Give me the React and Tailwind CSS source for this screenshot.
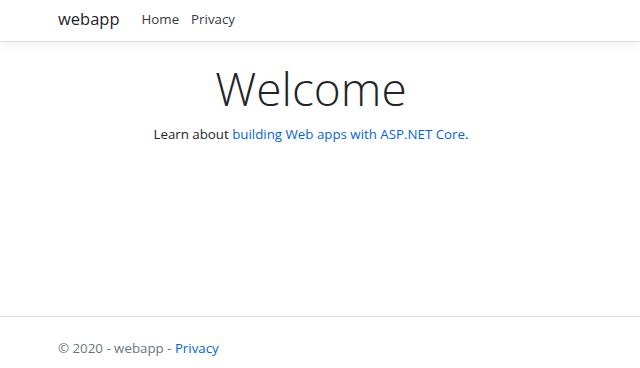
import React from 'react';

const App = () => {
  return (
    <div
      className="min-h-[368px] flex flex-col bg-white text-[13.3px] text-[#212529]"
      style={{ fontFamily: '"Open Sans", "Noto Sans", sans-serif' }}
    >
      {/* Header */}
      <header className="mb-[19px]">
        <nav className="h-[42px] bg-white border-b border-[#dee2e6] shadow-[0_3.5px_10.5px_rgba(0,0,0,0.05)]">
          <div className="h-full px-[58px] flex items-center pb-[2px]">
            <a href="#" className="text-[16.5px] text-black/90 mr-[22px]">webapp</a>
            <ul className="flex items-center">
              <li>
                <a href="#" className="block pr-[12px] text-[13.3px] text-[#343a40]">Home</a>
              </li>
              <li>
                <a href="#" className="block text-[13.3px] text-[#343a40]">Privacy</a>
              </li>
            </ul>
          </div>
        </nav>
      </header>

      {/* Main */}
      <main className="flex-1 text-center pr-[18px]">
        <h1 className="text-[46px] font-light leading-[1.2] mb-[8px]">Welcome</h1>
        <p className="leading-[21px]">
          Learn about <a href="#" className="text-[#0366d6]">building Web apps with ASP.NET Core</a>.
        </p>
      </main>

      {/* Footer */}
      <footer className="h-[52px] border-t border-[#dee2e6] text-[#6c757d] px-[58px] pt-[21px] leading-[21px]">
        © 2020 - webapp - <a href="#" className="text-[#0366d6]">Privacy</a>
      </footer>
    </div>
  );
};

export default App;
